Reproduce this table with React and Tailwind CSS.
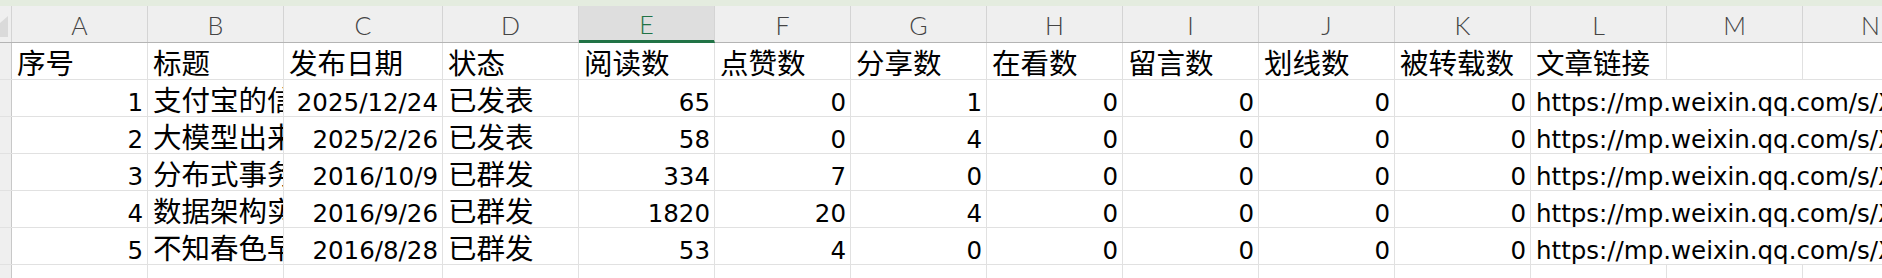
// Excel-like sheet view: column letters, header row and five article rows.

const LATIN = "font-['DejaVu_Sans',sans-serif] text-[24.5px]";
const CJK = "font-['Noto_Sans_CJK_SC',sans-serif] text-[28.5px]";

const COLS = [
  { key: 'A', w: 'w-[136px]' },
  { key: 'B', w: 'w-[136px]' },
  { key: 'C', w: 'w-[159px]' },
  { key: 'D', w: 'w-[136px]' },
  { key: 'E', w: 'w-[136px]', active: true },
  { key: 'F', w: 'w-[136px]' },
  { key: 'G', w: 'w-[136px]' },
  { key: 'H', w: 'w-[136px]' },
  { key: 'I', w: 'w-[136px]' },
  { key: 'J', w: 'w-[136px]' },
  { key: 'K', w: 'w-[136px]' },
  { key: 'L', w: 'w-[136px]' },
  { key: 'M', w: 'w-[136px]' },
  { key: 'N', w: 'w-[136px]' },
];

const HEADERS = ['序号', '标题', '发布日期', '状态', '阅读数', '点赞数', '分享数', '在看数', '留言数', '划线数', '被转载数', '文章链接', '', ''];

const ROWS = [
  [1, '支付宝的信任体系', '2025/12/24', '已发表', 65, 0, 1, 0, 0, 0, 0],
  [2, '大模型出来以后', '2025/2/26', '已发表', 58, 0, 4, 0, 0, 0, 0],
  [3, '分布式事务实践', '2016/10/9', '已群发', 334, 7, 0, 0, 0, 0, 0],
  [4, '数据架构实践', '2016/9/26', '已群发', 1820, 20, 4, 0, 0, 0, 0],
  [5, '不知春色早', '2016/8/28', '已群发', 53, 4, 0, 0, 0, 0, 0],
];

const URL = 'https://mp.weixin.qq.com/s/Xk3aPq9LmZ2wRt';

function RowStub() {
  return <div className="w-[12px] shrink-0 border-r border-[#c8c8c8] bg-[#efefef]" />;
}

function Num({ w, children }) {
  return (
    <div className={`${w} shrink-0 flex items-end justify-end overflow-hidden border-r border-[#e1e1e1] pr-[4px] pb-[1px] leading-none ${LATIN}`}>
      {children}
    </div>
  );
}

function Text({ w, children, latin = false }) {
  return (
    <div
      className={`${w} shrink-0 flex items-end overflow-hidden whitespace-nowrap border-r border-[#e1e1e1] pl-[5px] leading-none ${
        latin ? `${LATIN} pb-[1px]` : `${CJK} pb-[3px]`
      }`}
    >
      {children}
    </div>
  );
}

export default function App() {
  return (
    <div className="w-[1882px] h-[278px] overflow-hidden bg-white text-black">
      <div className="h-[6px] bg-[#e4ecdf]" />

      {/* column letters */}
      <div className="flex h-[37px] border-b border-[#b4b4b4] bg-[#efefef]">
        <div className="w-[12px] shrink-0 border-r border-[#d4d4d4]">
          <svg width="11" height="36" viewBox="0 0 11 36">
            <polygon points="0,17 8,10 8,31 0,31" fill="#dadada" />
          </svg>
        </div>
        {COLS.map((c) =>
          c.active ? (
            <div
              key={c.key}
              className={`${c.w} shrink-0 flex items-center justify-center border-r border-[#d4d4d4] border-b-[3px] border-b-[#217346] bg-[#dedede] -mb-[1px] pt-[3px] text-[25px] leading-none text-[#217346] font-['Lato',sans-serif] font-light`}
            >
              {c.key}
            </div>
          ) : (
            <div
              key={c.key}
              className={`${c.w} shrink-0 flex items-center justify-center border-r border-[#d4d4d4] pt-[3px] text-[25px] leading-none text-[#444] font-['Lato',sans-serif] font-light`}
            >
              {c.key}
            </div>
          )
        )}
      </div>

      {/* header row */}
      <div className="flex h-[37px] border-b border-[#e1e1e1]">
        <RowStub />
        {COLS.map((c, i) => (
          <Text key={c.key} w={c.w}>{HEADERS[i]}</Text>
        ))}
      </div>

      {ROWS.map((r) => (
        <div key={r[0]} className="flex h-[37px] border-b border-[#e1e1e1]">
          <RowStub />
          <Num w="w-[136px]">{r[0]}</Num>
          <Text w="w-[136px]">{r[1]}</Text>
          <Num w="w-[159px]">{r[2]}</Num>
          <Text w="w-[136px]">{r[3]}</Text>
          {r.slice(4).map((v, i) => (
            <Num key={i} w="w-[136px]">{v}</Num>
          ))}
          <Text w="w-[408px]" latin>{URL}</Text>
        </div>
      ))}

      <div className="flex h-[37px]">
        <RowStub />
        {COLS.map((c) => (
          <div key={c.key} className={`${c.w} shrink-0 border-r border-[#e1e1e1]`} />
        ))}
      </div>
    </div>
  );
}
